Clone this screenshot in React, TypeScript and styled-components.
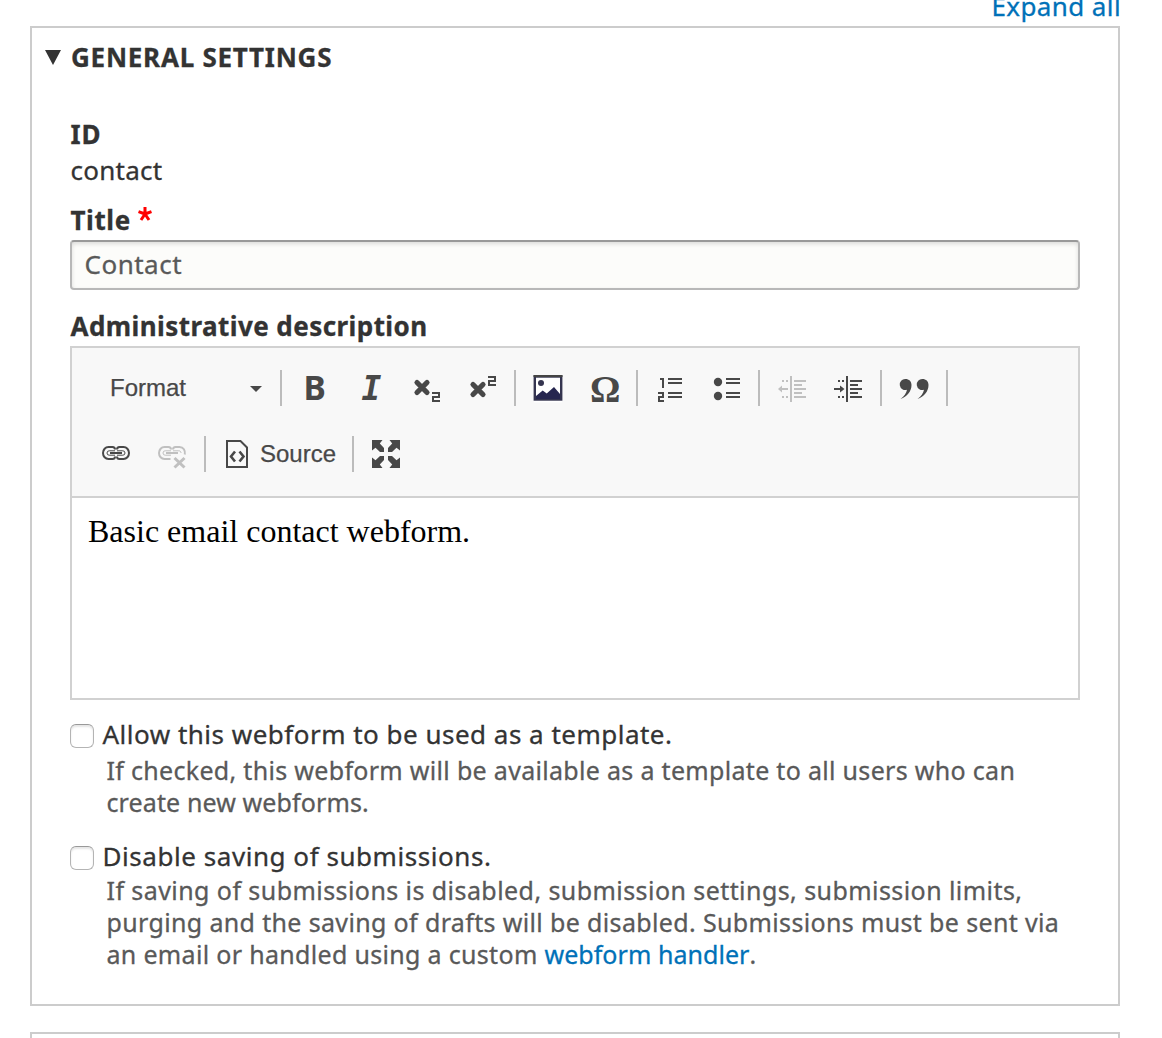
import { useState } from 'react';
import styled, { createGlobalStyle } from 'styled-components';

// --- Styled Components ---
const GlobalStyle = createGlobalStyle`
  * {
    box-sizing: border-box;
  }
  html,
  body {
    margin: 0;
    background: #fff;
    overflow: hidden;
  }
`;

const Page = styled.main`
  height: 1038px;
  padding: 0 42px 0 30px;
  overflow: hidden;
  color: #333;
  font-family: 'Noto Sans', 'Open Sans', sans-serif;
  font-size: 26px;
  line-height: 36px;
  -webkit-text-stroke: 0.3px;
`;

const TopBar = styled.div`
  display: flex;
  justify-content: flex-end;
  height: 26px;
  margin-right: -1px;
`;

const Link = styled.a<{ $track?: number }>`
  color: #0071b8;
  letter-spacing: ${({ $track }) => $track || 0}px;
  text-decoration: none;
  cursor: pointer;
`;

const ExpandLink = styled(Link)`
  margin-top: -12px;
`;

const Fieldset = styled.section`
  border: 2px solid #ccc;
  height: 980px;
  padding: 11px 38px 0;
  margin-bottom: 26px;
`;

const Legend = styled.button`
  display: flex;
  align-items: center;
  gap: 10px;
  height: 36px;
  margin: 0 0 41px -25px;
  padding: 0;
  border: none;
  background: none;
  color: inherit;
  font: inherit;
  font-weight: 700;
  letter-spacing: 0.75px;
  text-transform: uppercase;
`;

const Triangle = styled.span`
  border: 8.5px solid transparent;
  border-top: 15px solid #333;
  border-bottom: none;
`;

const Label = styled.div<{ $track: number }>`
  padding-left: 0.5px;
  font-weight: 700;
  letter-spacing: ${({ $track }) => $track}px;
`;

const Value = styled.div`
  margin-bottom: 14px;
  padding-left: 0.5px;
  letter-spacing: 0.25px;
`;

const Required = styled.svg`
  margin-left: 7px;
  vertical-align: 9px;
`;

const Input = styled.input`
  display: block;
  width: 100%;
  height: 50px;
  margin: 2px 0 18px;
  padding: 0 12.5px 3px;
  border: 2px solid #b8b8b8;
  border-top-color: #999;
  border-radius: 4px;
  background: #fcfcfa;
  box-shadow: inset 0 2px 4px rgba(0, 0, 0, 0.13);
  color: #595959;
  font: inherit;
  letter-spacing: 0.5px;
  -webkit-text-stroke: 0.3px;
`;

const Editor = styled.div`
  height: 354px;
  margin-top: 2px;
  border: 2px solid #d1d1d1;
  -webkit-text-stroke: 0;
`;

const Toolbar = styled.div`
  display: flex;
  flex-direction: column;
  gap: 30px;
  height: 150px;
  padding: 22px 16px 0;
  border-bottom: 2px solid #d1d1d1;
  background: #f8f8f8;
  color: #484848;
  font: 24px/36px 'Liberation Sans', Arial, sans-serif;
  -webkit-text-stroke: 0.25px;
`;

const ToolRow = styled.div`
  display: flex;
  height: 36px;
`;

const ToolButton = styled.button<{ $disabled?: boolean }>`
  display: flex;
  align-items: center;
  gap: 6px;
  padding: 0 12px;
  border: none;
  background: none;
  color: ${({ $disabled }) => ($disabled ? '#c0c0c0' : '#484848')};
  font: inherit;
`;

const SourceButton = styled(ToolButton)`
  width: 138px;
`;

const Combo = styled.div`
  display: flex;
  align-items: center;
  justify-content: space-between;
  width: 188px;
  padding: 0 14px 1px 22px;
`;

const Caret = styled.span`
  margin-top: 3px;
  border: 6px solid transparent;
  border-top-color: #484848;
  border-bottom: none;
`;

const Separator = styled.span`
  width: 2px;
  height: 36px;
  margin: 0 4px;
  background: #bcbcbc;
`;

const Content = styled.div`
  padding: 14px 16px;
  color: #000;
  font: 32px/38px 'Liberation Serif', 'Times New Roman', serif;
`;

const Option = styled.div<{ $top: number }>`
  display: grid;
  grid-template-columns: 24px 1fr;
  column-gap: 8.5px;
  margin-top: ${({ $top }) => $top}px;
`;

const Checkbox = styled.input`
  appearance: none;
  width: 24px;
  height: 24px;
  margin: 8px 0 0;
  border: 1.5px solid #b4b4b4;
  border-top-color: #999;
  border-radius: 6px;
  background: #fff;
  box-shadow: inset 0 2px 2px rgba(0, 0, 0, 0.1);
`;

const OptionLabel = styled.label<{ $track: number }>`
  letter-spacing: ${({ $track }) => $track}px;
  white-space: nowrap;
`;

const Description = styled.div<{ $top?: number }>`
  grid-column: 2;
  margin: ${({ $top }) => $top || 0}px 0 0 4px;
  color: #595959;
  font-size: 25px;
  line-height: 32px;
`;

const TextLine = styled.div<{ $track: number }>`
  letter-spacing: ${({ $track }) => $track}px;
  white-space: nowrap;
`;

const IconSvg = styled.svg`
  flex: none;
  display: block;
  width: 32px;
  height: 32px;
  overflow: visible;
  fill: none;
  stroke: currentColor;
  stroke-width: 2;

  text,
  .solid {
    fill: currentColor;
    stroke: none;
  }
`;

// --- Icons ---
const BoldIcon = () => (
  <IconSvg viewBox="0 0 32 32">
    <text x="5.5" y="28" fontFamily="Noto Sans" fontWeight="700" fontSize="33.6">B</text>
  </IconSvg>
);

const ItalicIcon = () => (
  <IconSvg viewBox="0 0 32 32">
    <text x="7.5" y="28" fontFamily="DejaVu Sans Mono" fontWeight="700" fontStyle="italic" fontSize="33">I</text>
  </IconSvg>
);

const SubscriptIcon = () => (
  <IconSvg viewBox="0 0 32 32">
    <path d="M7 10.500l10 10M17 10.500l-10 10" strokeWidth="5.200" strokeLinecap="round" />
    <path d="M22 21h7v4h-6v4h7" />
  </IconSvg>
);

const SuperscriptIcon = () => (
  <IconSvg viewBox="0 0 32 32">
    <path d="M7 12.500l10 10M17 12.500l-10 10" strokeWidth="5.200" strokeLinecap="round" />
    <path d="M22 5h7v4h-6v4h7" />
  </IconSvg>
);

const ImageIcon = () => (
  <IconSvg viewBox="0 0 32 32">
    <path d="M2 29.5h28" stroke="#fff" />
    <rect x="2.8" y="4.5" width="26.4" height="23" fill="#fff" stroke="#34344f" strokeWidth="2.4" />
    <path d="M1.5 4h29" stroke="#444" strokeWidth="2" />
    <circle cx="9" cy="11" r="3" fill="#34344f" stroke="none" />
    <path d="M4 27v-3l6.7-5.500 4 3 7.300-6.500 6 7V27z" fill="#26264f" stroke="none" />
  </IconSvg>
);

const OmegaIcon = () => (
  <IconSvg viewBox="0 0 32 32">
    <text x="2" y="30" fontFamily="Liberation Serif" fontWeight="700" fontSize="38">Ω</text>
  </IconSvg>
);

const NumberedListIcon = () => (
  <IconSvg viewBox="0 0 32 32">
    <path d="M6 7h3v9M4 21h5v4H5v4h5" />
    <path d="M14 7h14M14 11h14M14 21h14M14 25h14" />
  </IconSvg>
);

const BulletedListIcon = () => (
  <IconSvg viewBox="0 0 32 32">
    <circle className="solid" cx="8" cy="10" r="4.2" />
    <circle className="solid" cx="8" cy="24" r="4.2" />
    <path d="M16 7h14M16 11h14M16 21h14M16 25h14" />
  </IconSvg>
);

const IndentLines = () => (
  <>
    <path d="M15 4v26" />
    <path d="M18 9h12M18 13h8M18 17h12M18 21h8M18 25h12" />
    <path d="M6 9h2M10 9h2M6 25h2M10 25h2" />
  </>
);

const OutdentIcon = () => (
  <IconSvg viewBox="0 0 32 32">
    <IndentLines />
    <path d="M4 17h8" />
    <path className="solid" d="M2 17l4-3.5v7z" />
  </IconSvg>
);

const IndentIcon = () => (
  <IconSvg viewBox="0 0 32 32">
    <IndentLines />
    <path d="M2 17h8" />
    <path className="solid" d="M12.5 17L8 13.5v7z" />
  </IconSvg>
);

const QuoteIcon = () => (
  <IconSvg viewBox="0 0 32 32">
    <path className="solid" d="M7.5 7a5.5 5.5 0 1 0 1.500 10.700c-.6 3.600-3 6.800-6.500 9.300 6.500-2.200 11-7.500 11-14C13.500 9.200 11 7 7.500 7z" />
    <path className="solid" d="M24.500 7a5.500 5.500 0 1 0 1.500 10.700c-.6 3.600-3 6.800-6.500 9.300 6.500-2.200 11-7.500 11-14C30.500 9.200 28 7 24.500 7z" />
  </IconSvg>
);

const LinkIcon = () => (
  <IconSvg viewBox="0 0 32 32">
    <path d="M15 11.500C15 9.500 14 9 12.500 9h-4a5.500 6 0 0 0 0 12h4c1.500 0 2.500-.5 2.500-2.500" />
    <path d="M17 11.500C17 9.500 18 9 19.500 9h4a5.500 6 0 0 1 0 12h-4c-1.500 0-2.500-.5-2.500-2.500" />
    <path d="M15 12.800H9.200a2.200 2.200 0 0 0 0 4.400H15M17 12.800h5.800a2.200 2.200 0 0 1 0 4.400H17" strokeWidth="1" />
    <path d="M10 15h12" />
  </IconSvg>
);

const UnlinkIcon = () => (
  <IconSvg viewBox="0 0 32 32">
    <path d="M15 11.500C15 9.500 14 9 12.500 9h-4a5.500 6 0 0 0 0 12h6" />
    <path d="M17 11.500C17 9.500 18 9 19.500 9h4c4 0 6 3.500 5.300 7.500" />
    <path d="M15 12.800H9.200a2.200 2.200 0 0 0 0 4.400H15M17 12.800h5.800c1.500 0 2.200 1 2.200 2.200" strokeWidth="1" />
    <path d="M10 15h12" />
    <path d="M18.500 20l10 9.500M28.500 20l-10 9.500" strokeWidth="3" />
  </IconSvg>
);

const SourceIcon = () => (
  <IconSvg viewBox="0 0 32 32">
    <path d="M5 3h13.500l6.500 6.500V29H5z" />
    <path d="M13 13.500l-4 5 4 5M17.500 13.500l4 5-4 5" strokeWidth="2.600" />
  </IconSvg>
);

const MaximizeIcon = () => (
  <IconSvg viewBox="0 0 32 32">
    {[0, 90, 180, 270].map((angle) => (
      <path
        key={angle}
        className="solid"
        transform={`rotate(${angle} 16 16)`}
        d="M2 2h10.500L9.800 5.500 14 10v4h-4L5.500 9.800 2 12.500z"
      />
    ))}
  </IconSvg>
);

// --- Sub-Components ---
function EditorToolbar() {
  return (
    <Toolbar>
      <ToolRow>
        <Combo>
          Format
          <Caret />
        </Combo>
        <Separator />
        <ToolButton><BoldIcon /></ToolButton>
        <ToolButton><ItalicIcon /></ToolButton>
        <ToolButton><SubscriptIcon /></ToolButton>
        <ToolButton><SuperscriptIcon /></ToolButton>
        <Separator />
        <ToolButton><ImageIcon /></ToolButton>
        <ToolButton><OmegaIcon /></ToolButton>
        <Separator />
        <ToolButton><NumberedListIcon /></ToolButton>
        <ToolButton><BulletedListIcon /></ToolButton>
        <Separator />
        <ToolButton $disabled><OutdentIcon /></ToolButton>
        <ToolButton><IndentIcon /></ToolButton>
        <Separator />
        <ToolButton><QuoteIcon /></ToolButton>
        <Separator />
      </ToolRow>
      <ToolRow>
        <ToolButton><LinkIcon /></ToolButton>
        <ToolButton $disabled><UnlinkIcon /></ToolButton>
        <Separator />
        <SourceButton>
          <SourceIcon />
          Source
        </SourceButton>
        <Separator />
        <ToolButton><MaximizeIcon /></ToolButton>
      </ToolRow>
    </Toolbar>
  );
}

// --- Main Page Component ---
export default function App() {
  const [title, setTitle] = useState('Contact');

  return (
    <Page>
      <GlobalStyle />
      <TopBar>
        <ExpandLink $track={0.4}>Expand all</ExpandLink>
      </TopBar>

      <Fieldset>
        <Legend>
          <Triangle />
          General settings
        </Legend>

        <Label $track={0.8}>ID</Label>
        <Value>contact</Value>

        <Label $track={0.6}>
          Title
          <Required width="14" height="14" viewBox="0 0 14 14" stroke="#f00" strokeWidth="3">
            <path d="M7 0v7M0.500 4.600L7 7M13.500 4.600L7 7M3 13l4-6M11 13L7 7" />
          </Required>
        </Label>
        <Input value={title} onChange={(e) => setTitle(e.target.value)} />

        <Label $track={0.43}>Administrative description</Label>
        <Editor>
          <EditorToolbar />
          <Content>Basic email contact webform.</Content>
        </Editor>

        <Option $top={16}>
          <Checkbox type="checkbox" id="template" />
          <OptionLabel htmlFor="template" $track={0.49}>Allow this webform to be used as a template.</OptionLabel>
          <Description $top={2}>
            <TextLine $track={0.31}>If checked, this webform will be available as a template to all users who can</TextLine>
            <TextLine $track={0.12}>create new webforms.</TextLine>
          </Description>
        </Option>

        <Option $top={20}>
          <Checkbox type="checkbox" id="disable" />
          <OptionLabel htmlFor="disable" $track={0.55}>Disable saving of submissions.</OptionLabel>
          <Description>
            <TextLine $track={0.43}>If saving of submissions is disabled, submission settings, submission limits,</TextLine>
            <TextLine $track={0.355}>purging and the saving of drafts will be disabled. Submissions must be sent via</TextLine>
            <TextLine $track={0.32}>
              an email or handled using a custom <Link $track={0.05}>webform handler</Link>.
            </TextLine>
          </Description>
        </Option>
      </Fieldset>

      <Fieldset />
    </Page>
  );
}
